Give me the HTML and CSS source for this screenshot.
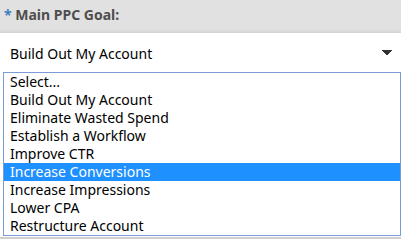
FILE: index.html
```html
<!DOCTYPE html>
<html lang="en">
<head>
    <meta charset="UTF-8">
    <meta name="viewport" content="width=device-width, initial-scale=1.0">
    <title>Main PPC Goal</title>
    <link rel="stylesheet" href="styles.css">
</head>
<body>
    <div class="field-label"><span class="required">*</span> Main PPC Goal:</div>

    <div class="field-box">
        <div class="select-box">
            <span>Build Out My Account</span>
            <svg class="select-arrow" width="10" height="6" viewBox="0 0 10 6">
                <path d="M0 0 H10 V1 H9 V2 H8 V3 H7 V4 H6 V5 H4 V4 H3 V3 H2 V2 H1 V1 H0 Z" fill="#333"/>
            </svg>
        </div>

        <ul class="option-list">
            <li>Select...</li>
            <li>Build Out My Account</li>
            <li>Eliminate Wasted Spend</li>
            <li>Establish a Workflow</li>
            <li>Improve CTR</li>
            <li class="selected">Increase Conversions</li>
            <li>Increase Impressions</li>
            <li>Lower CPA</li>
            <li>Restructure Account</li>
        </ul>
    </div>
</body>
</html>
```

FILE: styles.css
```css
body {
    margin: 0;
    background: white;
    font-family: "Noto Sans", "DejaVu Sans", sans-serif;
    overflow: hidden;
}

.field-label {
    height: 33px;
    box-sizing: border-box;
    padding: 5px 0 0 4px;
    background: linear-gradient(to bottom, #e1e1e1 0, #e1e1e1 29px, #d4d4d4 33px);
    color: #4e4e4e;
    font-size: 14px;
    font-weight: bold;
}

.required {
    color: #3d7fc1;
}

.field-box {
    background: white;
    border-bottom: 2px solid #cfcfcf;
    padding-bottom: 1px;
}

.select-box {
    height: 39px;
    display: flex;
    align-items: center;
    justify-content: space-between;
    padding: 1px 9px 0 10px;
    box-sizing: border-box;
    font-size: 14px;
    color: black;
}

.option-list {
    list-style: none;
    margin: 0 0 0 3px;
    padding: 0;
    border: 1px solid #7b9cd6;
    font-size: 14px;
    color: black;
}

.option-list li {
    height: 18px;
    line-height: 18px;
    padding-left: 6px;
}

.option-list .selected {
    background: #1e90ff;
    color: white;
}
```
